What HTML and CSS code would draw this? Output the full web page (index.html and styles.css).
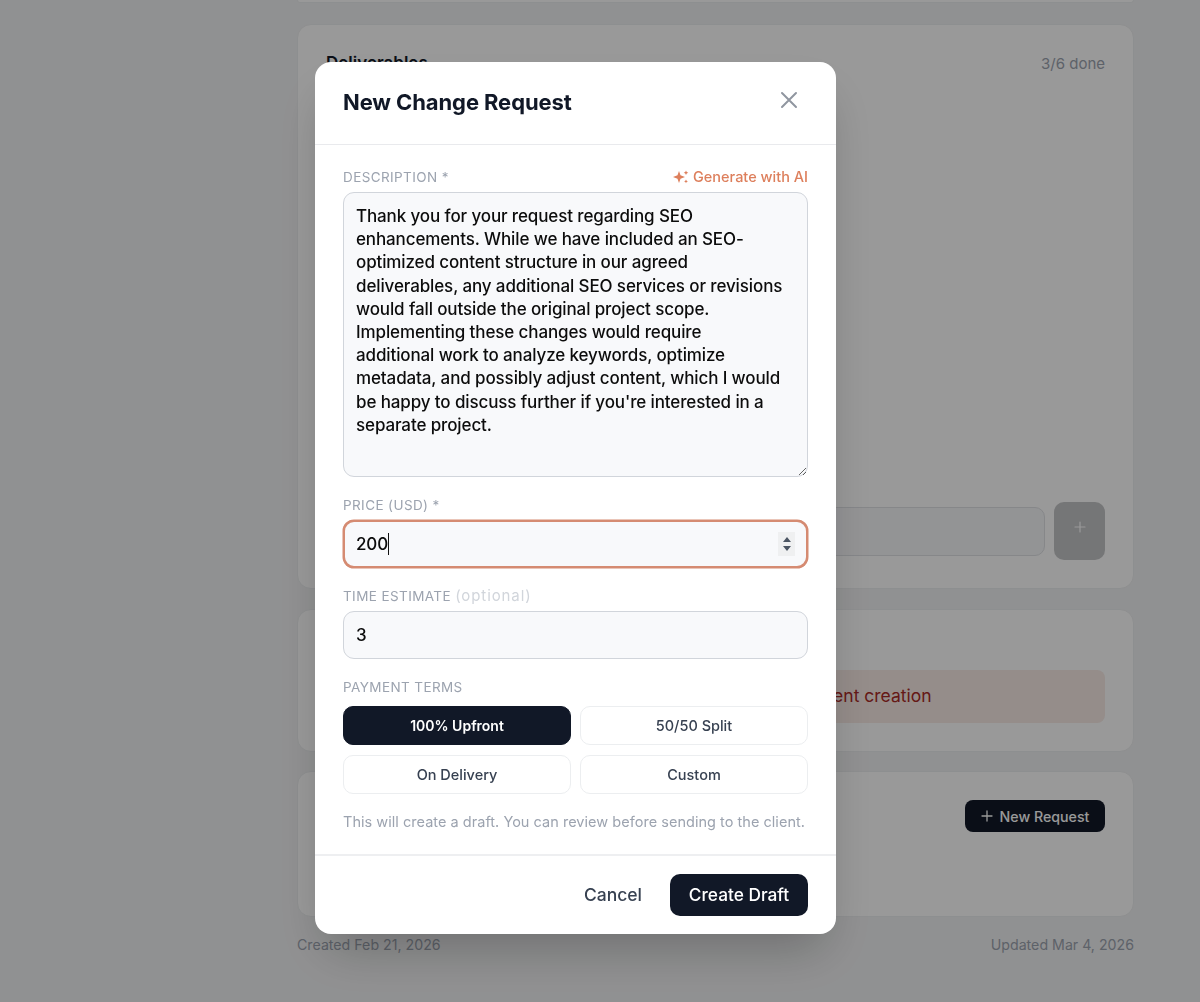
FILE: index.html
```html
<!DOCTYPE html>
<html lang="en">
  <head>
    <meta charset="UTF-8" />
    <meta name="viewport" content="width=device-width, initial-scale=1.0" />
    <title>New Change Request</title>
    <link rel="stylesheet" href="styles.css">
  </head>
  <body>
    <main class="page">
      <div class="card card-top"></div>

      <section class="card card-deliverables">
        <div class="card-head">
          <h3>Deliverables</h3>
          <span class="muted">3/6 done</span>
        </div>
        <div class="add-row">
          <input class="add-input" type="text" />
          <button class="add-btn" type="button">
            <svg width="12" height="12" viewBox="0 0 12 12" fill="none" stroke="currentColor" stroke-width="1.2" stroke-linecap="round"><path d="M6 1v10M1 6h10" /></svg>
          </button>
        </div>
      </section>

      <section class="card card-payment">
        <div class="alert">Payment is required before document creation</div>
      </section>

      <section class="card card-requests">
        <div class="requests-head">
          <button class="new-btn" type="button">
            <svg width="12" height="12" viewBox="0 0 12 12" fill="none" stroke="currentColor" stroke-width="1.3" stroke-linecap="round"><path d="M6 1v10M1 6h10" /></svg>
            New Request
          </button>
        </div>
      </section>

      <footer class="page-foot">
        <span>Created Feb 21, 2026</span>
        <span>Updated Mar 4, 2026</span>
      </footer>
    </main>

    <div class="overlay">
      <div class="modal">
        <div class="modal-head">
          <h2>New Change Request</h2>
          <button class="close-btn" type="button" aria-label="Close">
            <svg width="24" height="24" viewBox="0 0 24 24" fill="none" stroke="currentColor" stroke-width="2" stroke-linecap="round"><path d="M5 5l14 14M19 5L5 19" /></svg>
          </button>
        </div>

        <form class="modal-body">
          <div class="form-group">
            <div class="label-row">
              <label for="description">Description *</label>
              <button class="ai-btn" type="button">
                <svg width="16" height="16" viewBox="0 0 16 16" fill="currentColor"><path d="M6 2l1.5 4.3L12 8 7.5 9.7 6 14 4.5 9.7 0 8l4.5-1.7z" /><path d="M13 1.5l.7 1.6 1.6.7-1.6.7-.7 1.6-.7-1.6-1.6-.7 1.6-.7z" /><path d="M13 10.5l.6 1.3 1.3.6-1.3.6-.6 1.3-.6-1.3-1.3-.6 1.3-.6z" /></svg>
                Generate with AI
              </button>
            </div>
            <textarea id="description" class="field textarea" wrap="off">Thank you for your request regarding SEO
enhancements. While we have included an SEO-
optimized content structure in our agreed
deliverables, any additional SEO services or revisions
would fall outside the original project scope.
Implementing these changes would require
additional work to analyze keywords, optimize
metadata, and possibly adjust content, which I would
be happy to discuss further if you're interested in a
separate project.</textarea>
          </div>

          <div class="form-group">
            <label>Price (USD) *</label>
            <div class="field field-focus">
              <span>200</span><span class="caret"></span>
              <span class="spinner">
                <svg width="10" height="18" viewBox="0 0 10 18" fill="currentColor"><path d="M5 2l4 5H1zM5 16l-4-5h8z" /></svg>
              </span>
            </div>
          </div>

          <div class="form-group">
            <label for="estimate">Time estimate <span class="optional">(optional)</span></label>
            <input id="estimate" class="field" type="text" value="3" />
          </div>

          <div class="form-group">
            <label class="label-terms">Payment terms</label>
            <div class="terms">
              <button class="term term-active" type="button">100% Upfront</button>
              <button class="term" type="button">50/50 Split</button>
              <button class="term" type="button">On Delivery</button>
              <button class="term" type="button">Custom</button>
            </div>
          </div>

          <p class="note">This will create a draft. You can review before sending to the client.</p>
        </form>

        <div class="modal-foot">
          <button class="cancel-btn" type="button">Cancel</button>
          <button class="submit-btn" type="button">Create Draft</button>
        </div>
      </div>
    </div>
  </body>
</html>
```

FILE: styles.css
```css
* {
  box-sizing: border-box;
}
html,
body {
  margin: 0;
  height: 100%;
  overflow: hidden;
}
body {
  font-family: Inter, "Noto Sans", Arial, sans-serif;
  background-color: #f1f2f3;
  color: #111827;
}
button,
input,
textarea {
  font-family: inherit;
}
.page {
  width: 837px;
  margin-left: 297px;
}
.card {
  background-color: #ffffff;
  border: 1px solid #eceef0;
  border-radius: 14px;
}
.card-top {
  height: 3px;
  border-top: none;
  border-radius: 0 0 14px 14px;
  margin-bottom: 21px;
}
.card-deliverables {
  height: 565px;
  margin-bottom: 20px;
  padding: 28px 28px 28px;
  display: flex;
  flex-direction: column;
  justify-content: space-between;
}
.card-head {
  display: flex;
  justify-content: space-between;
  align-items: center;
  height: 20px;
}
.card-head h3 {
  margin: 0;
  font-size: 17px;
  font-weight: 600;
}
.muted {
  font-size: 15px;
  color: #9ca3af;
}
.add-row {
  display: flex;
  align-items: center;
  gap: 9px;
}
.add-input {
  flex: 1;
  height: 49px;
  border: 1px solid #dfe1e5;
  border-radius: 10px;
  background-color: #f6f7f9;
}
.add-btn {
  width: 51px;
  height: 58px;
  padding: 0 0 8px;
  border: none;
  border-radius: 10px;
  background-color: #c4c5c7;
  color: #ffffff;
  display: flex;
  align-items: center;
  justify-content: center;
}
.card-payment {
  height: 143px;
  margin-bottom: 19px;
  padding: 60px 28px 0;
}
.alert {
  height: 53px;
  padding-left: 222px;
  border-radius: 8px;
  background-color: #f8ebe6;
  color: #a82a26;
  font-size: 17.5px;
  line-height: 51px;
  white-space: nowrap;
}
.card-requests {
  height: 146px;
  padding: 28px;
}
.requests-head {
  display: flex;
  justify-content: flex-end;
}
.new-btn {
  height: 32px;
  width: 140px;
  padding: 0;
  border: none;
  border-radius: 8px;
  background-color: #111827;
  color: #ffffff;
  font-size: 14.2px;
  font-weight: 500;
  display: flex;
  align-items: center;
  justify-content: center;
  gap: 7px;
}
.page-foot {
  display: flex;
  justify-content: space-between;
  margin-top: 18px;
  font-size: 14.2px;
  line-height: 20px;
  color: #9ca3af;
}
.overlay {
  position: fixed;
  inset: 0;
  background-color: rgba(0, 0, 0, 0.4);
  padding: 62px 0 0 315px;
}
.modal {
  width: 521px;
  height: 872px;
  background-color: #ffffff;
  border-radius: 16px;
  box-shadow: 0 25px 50px -12px rgba(0, 0, 0, 0.25);
  display: flex;
  flex-direction: column;
}
.modal-head {
  height: 83px;
  padding: 0 28px;
  border-bottom: 1px solid #e9eaed;
  display: flex;
  justify-content: space-between;
  align-items: flex-start;
}
.modal-head h2 {
  margin: 27px 0 0;
  font-size: 22px;
  line-height: 26px;
  font-weight: 700;
  letter-spacing: -0.1px;
}
.close-btn {
  margin: 26px 7px 0 0;
  padding: 0;
  width: 24px;
  height: 24px;
  border: none;
  background: none;
  color: #9096a0;
}
.modal-body {
  flex: 1;
  padding: 22px 28px 0;
}
.form-group {
  margin-bottom: 18px;
}
.label-row {
  display: flex;
  justify-content: space-between;
  align-items: center;
}
label {
  display: block;
  height: 20px;
  margin-bottom: 5px;
  font-size: 13.5px;
  line-height: 20px;
  letter-spacing: 0.4px;
  text-transform: uppercase;
  color: #9ca3af;
}
.optional {
  font-size: 15px;
  letter-spacing: 0.9px;
  text-transform: none;
  color: #d1d5db;
}
.ai-btn {
  padding: 0;
  border: none;
  background: none;
  color: #dd7f5c;
  font-size: 14.5px;
  font-weight: 500;
  line-height: 20px;
  display: flex;
  align-items: center;
  gap: 4px;
  margin-bottom: 5px;
}
.field {
  display: flex;
  align-items: center;
  width: 100%;
  height: 48px;
  padding: 0 12px;
  border: 1px solid #d1d5db;
  border-radius: 11px;
  background-color: #f8f9fb;
  font-size: 17px;
  font-weight: 450;
  letter-spacing: -0.12px;
  color: #0c0c0c;
}
.textarea {
  display: block;
  height: 285px;
  padding: 12px 12px;
  line-height: 23.2px;
  overflow: hidden;
  resize: vertical;
}
.field-focus {
  border: 2px solid #d58b72;
  box-shadow: 0 0 0 0.5px #d58b72;
  padding: 0 11px;
}
.caret {
  width: 1px;
  height: 22px;
  background-color: #111111;
}
.spinner {
  margin-left: auto;
  width: 17px;
  height: 24px;
  background-color: #eff0f1;
  color: #4b5563;
  display: flex;
  align-items: center;
  justify-content: center;
}
.label-terms {
  margin-bottom: 9px;
}
.terms {
  display: grid;
  grid-template-columns: 228px 228px;
  gap: 10px 9px;
}
.term {
  height: 39px;
  padding-bottom: 1px;
  border: 1px solid #eceef0;
  border-radius: 10px;
  background-color: #ffffff;
  color: #374151;
  font-size: 14.5px;
  font-weight: 500;
}
.term-active {
  border-color: #111827;
  background-color: #111827;
  color: #ffffff;
  font-size: 14px;
  font-weight: 600;
}
.note {
  margin: 17px 0 0;
  font-size: 14.5px;
  line-height: 20px;
  letter-spacing: 0.03px;
  color: #9ca3af;
  white-space: nowrap;
}
.modal-foot {
  height: 80px;
  padding: 18px 28px 0;
  border-top: 2px solid #eeeff1;
  display: flex;
  justify-content: flex-end;
  align-items: flex-start;
  gap: 14px;
}
.cancel-btn {
  height: 42px;
  padding: 0 14px 2px;
  border: none;
  background: none;
  color: #374151;
  font-size: 17.5px;
  font-weight: 500;
}
.submit-btn {
  width: 138px;
  height: 42px;
  padding: 0 0 2px;
  border: none;
  border-radius: 10px;
  background-color: #111827;
  color: #ffffff;
  font-size: 17.3px;
  font-weight: 500;
}
```
